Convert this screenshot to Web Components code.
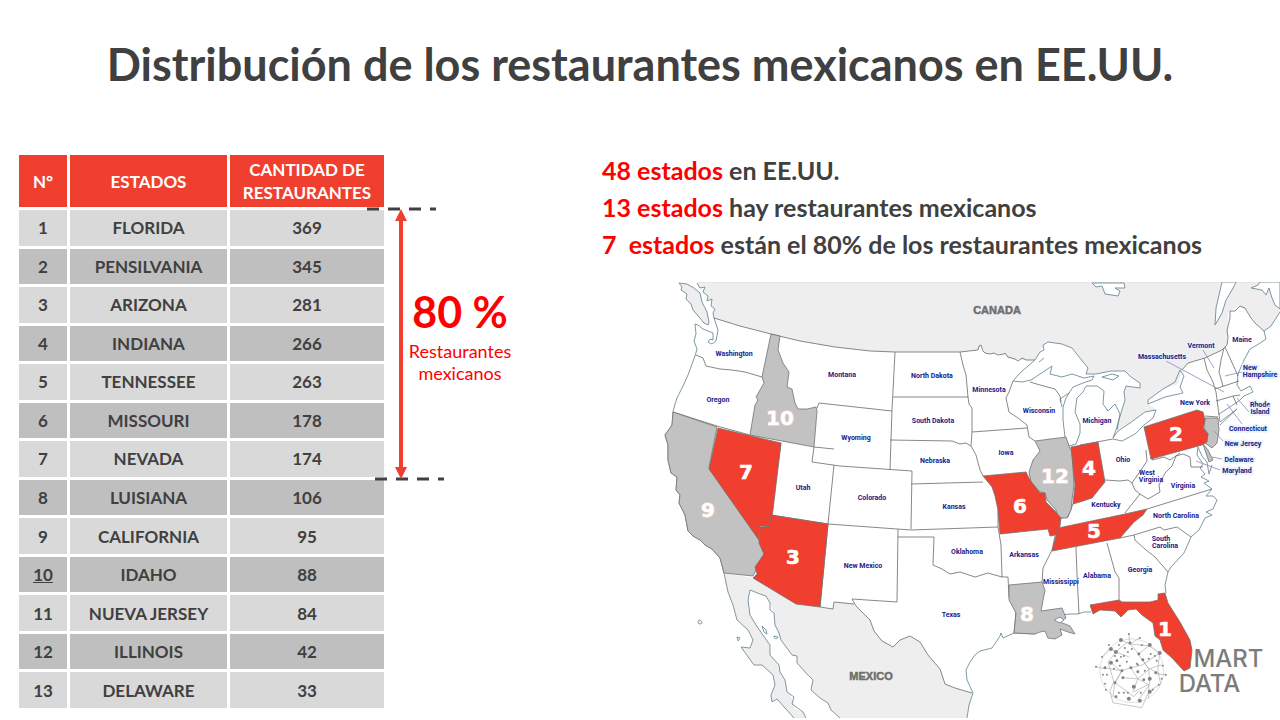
<!DOCTYPE html>
<html lang="es">
<head>
<meta charset="utf-8">
<title>Distribución de los restaurantes mexicanos en EE.UU.</title>
<style>
body { margin: 0; background: #fff; font-family: Lato, sans-serif; color: #404040; }
</style>
</head>
<body>
<report-slide>
  <span slot="title">Distribución de los restaurantes mexicanos en EE.UU.</span>
  <state-table slot="table"></state-table>
  <range-bracket slot="range"><span slot="value">80 %</span>Restaurantes mexicanos</range-bracket>
  <key-facts slot="facts">
    <key-fact><span slot="count">48 estados</span> en EE.UU.</key-fact>
    <key-fact><span slot="count">13 estados</span> hay restaurantes mexicanos</key-fact>
    <key-fact><span slot="count">7&nbsp; estados</span> están el 80% de los restaurantes mexicanos</key-fact>
  </key-facts>
  <usa-map slot="map"></usa-map>
</report-slide>

<script>
function define(name, html, setup) {
  customElements.define(name, class extends HTMLElement {
    constructor() {
      super();
      this.attachShadow({ mode: 'open' }).innerHTML = html;
      if (setup) setup(this.shadowRoot);
    }
  });
}

define('report-slide', `
<style>
:host { display: block; }
h1 { margin: 0; text-align: center; font-size: 45px; line-height: 128px; font-weight: 700; }
main { display: grid; grid-template-columns: minmax(0, 371fr) minmax(0, 215fr) minmax(0, 678fr); padding: 24px 0 0 16px; align-items: start; }
.right { display: flex; flex-direction: column; gap: 19px; }
.map { padding-left: 60px; }
</style>
<h1><slot name="title"></slot></h1>
<main>
  <slot name="table"></slot>
  <slot name="range"></slot>
  <div class="right"><slot name="facts"></slot><div class="map"><slot name="map"></slot></div></div>
</main>`);

define('key-facts', `
<style>
:host { display: block; }
</style>
<slot></slot>`);

define('key-fact', `
<style>
:host { display: block; font-size: 25px; line-height: 37px; font-weight: 700; white-space: nowrap; }
.count { color: #f00; }
</style>
<span class="count"><slot name="count"></slot></span><slot></slot>`);

define('range-bracket', `
<style>
:host { display: grid; color: #f00; text-align: center; }
svg, .label { grid-area: 1 / 1; }
svg { display: block; width: 90px; height: 280px; margin: 52px 0 0 -22px; }
.label { width: 124px; margin: 133px 0 0 11px; font-size: 18px; line-height: 22px; }
.value { display: block; font-size: 43px; line-height: 54px; font-weight: 700; }
.label slot { display: block; }
p { margin: 1px 10px 0; }
</style>
<svg viewBox="0 0 90 280" aria-hidden="true">
  <path d="M2 5H71M10 275H79" stroke="#404040" stroke-width="3" stroke-dasharray="12 9"/>
  <path d="M36 12V268" stroke="#f03f2f" stroke-width="4"/>
  <path d="M36 5l6 12H30zM36 275l6-12H30z" fill="#f03f2f"/>
</svg>
<div class="label"><span class="value"><slot name="value"></slot></span><p><slot></slot></p></div>`);

define('state-table', `
<style>
:host { display: block; }
table { width: 100%; height: 559px; border-spacing: 3px; table-layout: fixed; font-size: 17px; line-height: 23px; font-weight: 700; text-align: center; }
col.n { width: 48px; }
col.s { width: 157px; }
th, td { padding: 0; }
th { height: 52px; background: #f03f2f; color: #fff; font-weight: 700; }
td { height: 34px; background: #d9d9d9; }
tr:nth-child(even) td { background: #bfbfbf; }
.u { text-decoration: underline; }
</style>
<table>
  <colgroup><col class="n"><col class="s"><col></colgroup>
  <thead><tr><th scope="col">N°</th><th scope="col">ESTADOS</th><th scope="col">CANTIDAD DE<br>RESTAURANTES</th></tr></thead>
  <tbody></tbody>
</table>`, root => {
  const rows = [['FLORIDA', 369], ['PENSILVANIA', 345], ['ARIZONA', 281], ['INDIANA', 266], ['TENNESSEE', 263], ['MISSOURI', 178], ['NEVADA', 174], ['LUISIANA', 106], ['CALIFORNIA', 95], ['IDAHO', 88], ['NUEVA JERSEY', 84], ['ILLINOIS', 42], ['DELAWARE', 33]];
  root.querySelector('tbody').innerHTML = rows.map(([name, count], i) =>
    `<tr><td>${i === 9 ? '<span class="u">10</span>' : i + 1}</td><td>${name}</td><td>${count}</td></tr>`).join('');
});

define('brand-logo', `
<style>
:host { display: block; }
svg { display: block; width: 100%; overflow: visible; }
text { font: 500 24px Inter, sans-serif; fill: #7c7c7c; }
</style>
<svg viewBox="1094 629 180 74" role="img" aria-label="Smart Data">
  <g fill="none" stroke="#b0b0b0" stroke-width=".7">
    <circle cx="1131" cy="671" r="32" stroke="#d4d4d4"/>
    <path d="M1120 640l9 4 19 2 11 7-2 18 3 13-12 8-7 16-18-3-11-2-3-12 4-9-6-20 10-12 10-8M1129 644l9 10 10-8M1110 649l5 3 13 5M1110 663l10 8 10-3 12-3 17-12M1104 668l17 3-7 12 7 5 12 9 5-6M1114 683l7-12M1130 668l7 11-5 13M1137 679l12-10 10 5M1133 692l16-8-1-15-11-15M1122 678l15 1 11 6 0 14M1095 667l9 2M1101 657l9-8M1112 697l2-14M1128 634l1 10M1139 638l-10 6M1142 660l6 9 13-4M1149 685l-12 16M1155 674l10 1"/>
  </g>
  <g fill="#858585" id="dots"></g>
  <text x="1193" y="667">MART</text>
  <text x="1178" y="692">DATA</text>
</svg>`, root => {
  const dots = [[1120,640,2], [1129,643,1.5], [1149,645,2], [1159,653,2], [1110,649,2], [1115,652,2], [1138,654,1.5], [1110,663,2], [1104,668,1.5], [1130,668,1.5], [1142,660,1.5], [1121,671,1.5], [1122,678,1.5], [1137,672,1.5], [1149,679,2], [1143,680,1.5], [1133,687,2], [1114,683,1.5], [1149,692,2], [1128,699,2], [1139,701,2], [1155,673,1.5], [1116,661,1.5], [1128,634,1], [1139,638,1], [1101,657,1], [1095,667,1], [1106,675,1], [1102,675,1], [1104,684,1], [1105,690,1], [1115,697,1.5], [1118,693,1], [1123,693,1], [1127,693,1], [1165,675,1], [1158,685,1], [1152,690,1], [1156,661,1], [1162,666,1], [1148,659,1], [1136,664,1], [1127,652,1], [1120,657,1], [1124,648,1], [1114,656,1], [1118,645,1], [1141,645,1], [1131,649,1], [1150,654,1], [1154,656,1], [1126,662,1], [1119,666,1], [1161,679,1], [1144,671,1], [1137,665,1], [1113,669,1], [1123,656,1], [1108,645,1], [1140,693,1]];
  root.getElementById('dots').innerHTML = dots.map(([x, y, r]) => `<circle cx="${x}" cy="${y}" r="${r}"/>`).join('');
});

define('usa-map', `
<style>
:host { display: block; position: relative; }
svg.map { display: block; width: 100%; }
brand-logo { position: absolute; right: 1%; bottom: 4%; width: 29%; }
.land { fill: #eee; stroke: none; }
.water { fill: #fff; stroke: #7d95a1; }
.island { fill: #eee; stroke: #7d95a1; }
.edge { fill: none; stroke: #ddd; }
.line { fill: none; stroke: #6a6a6a; stroke-width: .8; stroke-linejoin: round; }
.coast { fill: none; stroke: #728c99; stroke-width: .9; stroke-linejoin: round; }
.hot { fill: #f03f2f; stroke: #727272; stroke-width: .8; }
.warm { fill: #c2c2c2; stroke: #727272; stroke-width: .8; }
.leader { fill: none; stroke: #8888bd; stroke-width: .8; }
.names text { font: 700 7px Roboto, sans-serif; fill: #20208a; text-anchor: middle; }
.names .halo { paint-order: stroke; stroke: #e6f4fd; stroke-width: 3px; }
.num text { font: 700 20px "DejaVu Sans", sans-serif; fill: #fff; stroke: #fff; stroke-width: .6px; text-anchor: middle; }
.num .soft { paint-order: stroke; stroke: #f3d3cf; stroke-width: 1.4px; }
.country text { font: 700 11px "Liberation Sans", sans-serif; fill: #6f6f6f; text-anchor: middle; stroke: #6f6f6f; stroke-width: .5px; }
</style>
<svg class="map" viewBox="662 282 618 438" role="img" aria-label="Mapa de EE.UU.">
  <path class="land" d="M697 282L700 288 705 287 703 292 708 296 707 301 712 299 711 306 715 309 713 313 714 318 740 326 771 334 800 341 835 347 870 351 895 352 960 352 978 350 981 345 985 353 994 354 1005 354 1007 358 1015 360 1035 360 1040 352 1046 342 1062 344 1072 348 1080 358 1088 368 1086 374 1096 374 1111 371 1125 371 1131 377 1140 383 1140 388 1126 386 1124 392 1125 400 1121 413 1116 430 1130 423 1145 412 1156 410 1148 404 1148 400 1163 389 1178 384 1182 370 1188 363 1205 358 1222 350 1227 345 1228 312 1240 306 1248 312 1255 323 1264 331 1271 326 1280 312V282z"/>
  <path class="island" d="M679 283L682 287 681 290 687 294 686 299 691 304 693 310 699 317 704 323 708 325 709 322 707 312 702 302 700 293 694 288 687 284z"/>
  <path class="edge" d="M698 282H1280"/>
  <path class="coast" d="M697 283L700 288 705 287 703 292 708 296 707 301 712 299 711 306 715 309 713 313 714 318 718 330 716 341 712 344 708 342 710 339 713 340 713 333 703 329 698 325 695 324 696 334 694 341 697 349 695 356 688 375 683 386 677 398 675 404 673 412 672 425 665 435 668 445 668 460 671 473 677 477 676 490 680 495 679 503 685 515 688 531 693 536 700 540 705 545 712 549 720 558 724 573"/>
  <path class="water" d="M1222 282L1216 308 1215 325 1222 313 1226 300 1232 290 1236 282zM1260 282L1258 285 1251 288 1262 290 1266 295 1269 288 1272 298 1275 305 1280 309V282zM1092 283L1096 287 1102 286 1105 294 1118 296 1120 291 1115 288 1125 288 1124 283z"/>
  <path class="line" d="M714 318L740 326 771 334 800 341 835 347 870 351 895 352 960 352 978 350 979 346 981 345 983 351 985 353 990 354 994 353 998 355 1004 354 1005 353 1008 357 1015 359 1018 361 1022 358 1026 360 1035 360M1182 370L1188 363 1205 358 1222 350 1227 345 1228 338 1227 330 1230 318 1230 311 1235 311 1240 306 1245 308 1251 318 1255 323 1264 331"/>
  <path class="coast" d="M1035 360L1040 352 1044 350 1043 345 1048 342 1062 344 1072 348 1080 358 1088 368 1086 374 1096 374 1111 371 1125 371 1131 377 1140 383 1140 388 1126 386 1124 392 1125 400 1121 413 1116 430 1113 438 1118 431 1130 423 1145 412 1156 410 1153 418 1144 425 1135 434 1122 441 1113 439M1035 360L1020 373 1013 381 1022 382 1031 380 1052 366 1050 374 1062 377 1072 374 1084 378 1094 376 1092 380 1083 383 1073 387 1066 398 1063 407 1063 420 1065 437 1069 446 1076 444 1080 433 1080 424 1075 412 1077 398 1083 392 1086 386 1097 386 1104 391 1103 404 1108 411 1115 404 1120 414 1117 430M1062 407L1060 399 1069 393M1039 362l5-4M1102 377L1112 374 1119 376 1113 380zM1148 404L1148 400 1163 389 1175 382 1180 370 1184 376 1180 387 1183 393 1165 397zM1264 331L1266 339 1257 345 1250 349 1244 360 1238 374 1237 385 1241 391 1250 386 1253 392 1244 396 1240 400 1230 407 1219 414 1220 422 1237 409 1220 425M1264 331L1271 326 1280 312"/>
  <path class="land" d="M724 573L753 578 796 604 833 609 834 602 852 603 862 612 870 620 874 631 882 641 893 647 900 640 910 636 920 642 928 655 940 669 945 684 955 688 972 693 969 705 967 718H840L831 710 828 703 820 698 811 690 813 680 807 674 797 663 797 656 792 655 781 640 775 625 774 613 770 603 766 596 760 594 750 590 748 600 750 615 758 628 765 638 770 645 770 655 779 665 780 672 785 680 787 692 793 700 795 709 803 712 806 718H794L785 708 777 699 772 702 771 695 775 685 773 675 762 665 754 665 741 647 750 648 753 640 748 630 737 620 733 605 728 592z"/>
  <path class="coast" d="M840 718L831 710 828 703 820 698 811 690 813 680 807 674 797 663 797 656 792 655 781 640 779 633 775 625 774 613 770 610 770 603 766 596 760 594 750 590 748 600 750 615 758 628 765 638 770 645 770 655 779 665 780 672 785 680 787 692 794 697 792 704 799 709 803 712 806 718M794 718L785 708 777 699 772 702 771 695 775 685 773 675 762 665 754 665 741 647 750 648 753 640 748 630 737 620 733 605 728 592 724 573M700 620a2 2 0 1 0 2 2zM737 637l3 1-2 3zM762 626l4 4 1 4-3-2zM774 636a2 2 0 1 0 4 1zM967 718L969 705 973 693 967 680 966 670 970 662 975 655 980 651 992 648 1000 636 1001 633 1003 638 1014 633 1035 634M1062 615L1070 614 1078 614 1084 612 1091 612M1166 593L1165 585 1168 572 1171 567 1184 553 1191 537 1199 530 1205 518 1212 515 1206 512 1213 509 1217 500 1213 496 1206 496 1212 489 1204 483 1209 481 1201 477 1205 474 1200 468 1203 464 1197 455 1198 447 1202 456 1207 462 1209 474 1212 465"/>
  <path class="line" d="M696 355L703 358 706 366 720 369 732 370 745 372 762 377M673 412L717 426 750 435M814 447L834 449M817 408L819 403 892 411M895 352L892 410 890 470M814 447L812 462 840 466 912 471 911 529M781 443L771 515 828 524 911 530 998 527M834 465L828 524 820 607 833 609 834 602 854 604M898 529L897 602 852 599 856 606 862 612 870 620 874 631 882 641 893 647 900 640 910 636 920 642 928 655 940 669 945 684 955 688 972 693M898 537L934 537 933 565 942 569 950 574 960 572 975 577 988 573 1002 577 1008 577 1009 597 1016 612 1014 633M911 484L983 482M890 440L952 441 960 444 966 443 971 446 976 455 980 470 983 476M893 397H968M960 352L963 365 966 375 968 397 969 404 972 408 972 432 971 446M972 432L1027 428M1013 381L1009 392 1006 398 1009 412 1018 418 1027 425 1029 437 1035 441M1030 382L1040 385 1055 389 1060 396 1061 402M998 510L998 527 1001 545 1002 577M1055 536L1052 550 1043 568 1042 582M1105 480L1120 481 1128 480 1132 483 1135 490 1140 494 1125 513M1061 518L1068 517 1073 504M1076 547L1077 575 1079 614M1107 543L1115 572 1119 578 1119 600M1120 538L1134 535 1160 527 1164 530 1177 527 1191 537M1134 535L1135 540 1146 550 1155 557 1168 572M1147 509L1212 489M1140 494L1148 499 1160 492 1159 485 1165 473 1172 466 1176 456 1183 454 1190 457 1191 467 1203 467M1132 483L1141 470 1147 461 1146 450M1150 459L1154 454 1152 460 1164 457 1170 460 1180 453M1080 445L1113 439M1204 358L1207 370 1213 382 1216 392 1219 415M1224 348L1221 360 1219 372 1223 386M1225 347L1238 376M1215 389L1239 381M1216 401L1233 396 1240 395M1233 396L1237 405M1205 416L1218 417"/>
  <path class="warm" d="M673 412L672 425 665 435 668 445 668 460 671 473 677 477 676 490 680 495 679 503 685 515 688 531 693 536 700 540 705 545 712 549 720 558 724 573 753 576 757 568 764 554 759 540 709 468 717 427z"/>
  <path class="warm" d="M771 334L780 336 778 350 783 363 789 372 787 387 792 389 795 403 798 409 807 409 816 407 817 411 814 447 750 435 755 405 758 400 756 397 764 383 762 377z"/>
  <path class="warm" d="M1035 441L1066 437 1069 446 1072 452 1074 485 1072 500 1071 510 1067 518 1061 518 1057 515 1056 510 1047 500 1045 493 1040 492 1031 482 1029 472 1033 460 1040 451z"/>
  <path class="warm" d="M1009 585L1042 582 1045 590 1041 611 1062 608 1066 618 1060 622 1070 626 1075 634 1068 632 1060 629 1062 635 1055 639 1048 638 1045 631 1040 632 1035 634 1014 633 1016 613 1009 600z"/>
  <path class="warm" d="M1205 418L1218 418 1219 430 1217 443 1212 448 1205 443 1208 434 1204 428zM1203 444L1208 450 1213 460 1209 462z"/>
  <path class="water" d="M1054 620L1060 617 1064 620 1060 623z"/>
  <path class="hot" d="M718 428L781 443 771 527 760 526 759 540 709 469z"/>
  <path class="hot" d="M771 515L828 524 820 607 796 604 753 578 757 574 755 567 764 554 759 543 760 527 769 527z"/>
  <path class="hot" d="M983 476L1026 472 1030 480 1040 493 1045 493 1046 502 1055 511 1061 518 1060 526 1056 535 1050 536 1048 529 1000 534 998 510 995 496 992 487z"/>
  <path class="hot" d="M1071 447L1098 442 1105 482 1100 488 1092 498 1083 501 1073 504 1075 485z"/>
  <path class="hot" d="M1058 528L1125 514 1147 509 1143 515 1134 522 1120 538 1052 551z"/>
  <path class="hot" d="M1144 427L1197 410 1203 412 1205 420 1203 428 1208 434 1207 442 1202 445 1151 459z"/>
  <path class="hot" d="M1090 605L1119 600 1122 602 1150 602 1158 600 1158 594 1165 593 1168 603 1180 622 1190 640 1192 650 1190 668 1184 671 1172 658 1163 650 1160 640 1155 636 1153 623 1142 615 1136 609 1128 610 1121 617 1115 611 1100 610 1093 614z"/>
  <path class="leader" d="M1203 350L1214 368M1166 361L1224 392M1225 376L1242 372M1237 398L1249 412M1227 404L1242 424M1214 431L1223 441M1212 457L1222 459M1196 461L1220 470"/>
  <g class="country"><text x="997" y="314">CANADA</text><text x="871" y="680">MEXICO</text></g>
  <g class="names">
    <text x="734" y="356">Washington</text><text x="718" y="402">Oregon</text><text x="842" y="377">Montana</text><text x="932" y="378">North Dakota</text><text x="989" y="392">Minnesota</text><text x="933" y="423">South Dakota</text><text x="1039" y="413">Wisconsin</text><text x="856" y="440">Wyoming</text><text x="935" y="463">Nebraska</text><text x="1006" y="455">Iowa</text><text x="803" y="490">Utah</text><text x="872" y="500">Colorado</text><text x="954" y="509">Kansas</text><text x="863" y="568">New Mexico</text><text x="967" y="554">Oklahoma</text><text x="1024" y="557">Arkansas</text><text x="951" y="617">Texas</text><text x="1061" y="584">Mississippi</text><text x="1097" y="578">Alabama</text><text x="1140" y="572">Georgia</text><text x="1106" y="507">Kentucky</text><text x="1123" y="462">Ohio</text><text x="1097" y="423">Michigan</text><text x="1147" y="475">West</text><text x="1151" y="482">Virginia</text><text x="1183" y="488">Virginia</text><text x="1176" y="518">North Carolina</text><text x="1161" y="541">South</text><text x="1165" y="548">Carolina</text><text x="1195" y="405">New York</text><text x="1242" y="342">Maine</text>
    <text class="halo" x="1201" y="348">Vermont</text><text class="halo" x="1162" y="359">Massachusetts</text><text class="halo" x="1250" y="370">New</text><text class="halo" x="1260" y="377">Hampshire</text><text class="halo" x="1260" y="407">Rhode</text><text class="halo" x="1260" y="414">Island</text><text class="halo" x="1248" y="431">Connecticut</text><text class="halo" x="1243" y="446">New Jersey</text><text class="halo" x="1239" y="462">Delaware</text><text class="halo" x="1237" y="473">Maryland</text>
  </g>
  <g class="num">
    <text x="1165" y="636">1</text><text x="1176" y="441">2</text><text x="793" y="564">3</text><text x="1089" y="475">4</text><text x="1094" y="538">5</text><text x="1020" y="513">6</text><text x="746" y="479">7</text><text class="soft" x="1027" y="621">8</text><text class="soft" x="708" y="517">9</text><text class="soft" x="780" y="425">10</text><text class="soft" x="1055" y="483">12</text>
  </g>
</svg>
<brand-logo></brand-logo>`);
</script>
</body>
</html>
